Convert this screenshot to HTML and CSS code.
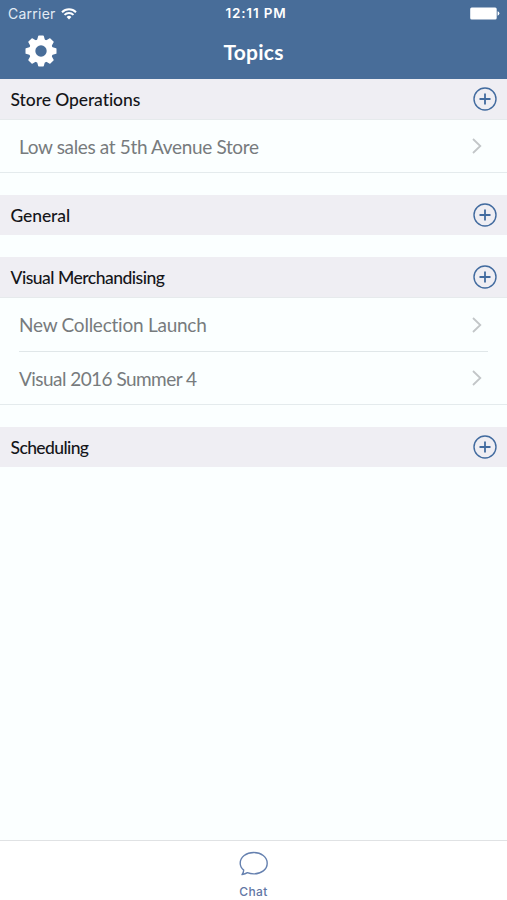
FILE: index.html
```html
<!DOCTYPE html>
<html lang="en">
<head>
<meta charset="utf-8">
<title>Topics</title>
<link rel="stylesheet" href="styles.css">
</head>
<body>
<svg width="0" height="0" class="defs">
  <symbol id="plus" viewBox="0 0 24 24"><circle cx="12" cy="12" r="11" fill="none" stroke="currentColor" stroke-width="1.4"/><path d="M12 6.5v11M6.5 12h11" fill="none" stroke="currentColor" stroke-width="1.8"/></symbol>
  <symbol id="chevron" viewBox="0 0 10 16"><path d="M1 1l7.3 7L1 15" fill="none" stroke="currentColor" stroke-width="1.8"/></symbol>
</svg>
<div class="app">
  <header class="header">
    <div class="status">
      <div class="carrier"><span>Carrier</span>
        <svg width="16" height="12" viewBox="0 0 16 12" fill="none" stroke="#fff" stroke-width="2"><path d="M1 4.2a10 10 0 0 1 14 0M3.5 6.9a6.4 6.4 0 0 1 9 0"/><path d="M8 11.4L5.6 9a3.4 3.4 0 0 1 4.8 0z" fill="#fff" stroke="none"/></svg>
      </div>
      <span class="time">12:11 PM</span>
      <svg class="battery" width="31" height="13" viewBox="0 0 31 13" fill="#fff"><rect x="1.2" y=".5" width="26.5" height="12" rx="1.5"/><path d="M28.6 4.3q1.8.6 1.8 2.2t-1.8 2.2z"/></svg>
    </div>
    <div class="nav">
      <svg class="gear" width="32" height="32" viewBox="-16 -16 32 32">
        <g fill="#fff">
          <path id="tooth" d="M-4.2-10L-2.8-15.1Q-2.7-15.5-2.2-15.5H2.2Q2.7-15.5 2.8-15.1L4.2-10V10L2.8 15.1Q2.7 15.5 2.2 15.5H-2.2Q-2.7 15.5-2.8 15.1L-4.2 10z"/>
          <use href="#tooth" transform="rotate(45)"/><use href="#tooth" transform="rotate(90)"/><use href="#tooth" transform="rotate(135)"/>
          <circle r="12"/>
        </g>
        <circle r="5.7" fill="#486d99"/>
      </svg>
      <h1 class="title">Topics</h1>
    </div>
  </header>
  <main class="topics">
    <section class="group">
      <h2 class="head lined"><span class="operations">Store Operations</span><svg class="plus"><use href="#plus"/></svg></h2>
      <div class="rows"><div class="row"><span class="sales">Low sales at 5th Avenue Store</span><svg class="chevron"><use href="#chevron"/></svg></div></div>
    </section>
    <section class="group">
      <h2 class="head"><span class="general">General</span><svg class="plus"><use href="#plus"/></svg></h2>
    </section>
    <section class="group">
      <h2 class="head lined"><span class="visual">Visual Merchandising</span><svg class="plus"><use href="#plus"/></svg></h2>
      <div class="rows">
        <div class="row"><span class="launch">New Collection Launch</span><svg class="chevron"><use href="#chevron"/></svg></div>
        <div class="row"><span class="summer">Visual 2016 Summer 4</span><svg class="chevron"><use href="#chevron"/></svg></div>
      </div>
    </section>
    <section class="group">
      <h2 class="head"><span class="scheduling">Scheduling</span><svg class="plus"><use href="#plus"/></svg></h2>
    </section>
  </main>
  <footer class="tabbar">
    <svg width="30" height="26" viewBox="0 0 30 26" fill="none" stroke="#6580af" stroke-width="1.4" stroke-linejoin="round"><path d="M4.7 19.1C2.3 17.2 1.2 14.8 1.2 12.2 1.2 6 7.3 1.5 14.7 1.5S28.2 6 28.2 12.2 22.4 22.9 14.7 22.9c-2.4 0-4.4-.4-6.3-1.2-1.4.9-3 1.5-5.4 1.9 1.1-1.2 1.7-2.6 1.7-4.5z"/></svg>
    <span class="tablabel">Chat</span>
  </footer>
</div>
</body>
</html>
```
FILE: styles.css
```css
* { box-sizing: border-box; }
body { margin: 0; font-family: Lato, "Liberation Sans", sans-serif; font-variant-ligatures: none; background: #fbffff; }
svg { display: block; flex: none; }
.defs { position: absolute; }
.app { display: flex; flex-direction: column; height: 900px; }
.header { height: 79px; background: #486d99; color: #fff; }
.status { display: grid; grid-template-columns: 1fr auto 1fr; align-items: center; height: 27px; padding: 0 7px 0 8px; font: 14px/27px Inter, sans-serif; }
.carrier { display: flex; align-items: center; gap: 5px; color: #e2ebf5; letter-spacing: .25px; }
.time { font-size: 13.5px; font-weight: 600; letter-spacing: .85px; padding-left: 4px; }
.battery { justify-self: end; }
.nav { display: grid; grid-template-columns: 1fr auto 1fr; height: 50px; align-items: center; }
.gear { margin-left: 24.5px; margin-top: -2px; }
.title { margin: 0; font-size: 21px; font-weight: 700; line-height: 26px; letter-spacing: .25px; }
.topics { flex: 1; display: flex; flex-direction: column; gap: 22px; }
.head { display: flex; align-items: center; justify-content: space-between; height: 40px; margin: 0; padding: 0 10px 0 10.5px; background: #efeef3; color: #151519; font-size: 17.5px; font-weight: 500; }
.head.lined { height: 41px; border-bottom: 1px solid #e6eaec; }
.plus { width: 24px; height: 24px; color: #426b9f; }
.operations { letter-spacing: -.08px; }
.general { letter-spacing: -.1px; }
.visual { letter-spacing: -.5px; }
.scheduling { letter-spacing: -.6px; }
.rows { border-bottom: 1px solid #e4ebed; }
.row { display: flex; align-items: center; justify-content: space-between; height: 53px; margin: 0 19px; padding-right: 6px; color: #777b7d; font-size: 19px; }
.row:only-child { height: 52px; }
.row + .row { border-top: 1px solid #e0e7e9; }
.sales { letter-spacing: -.35px; }
.launch { letter-spacing: -.24px; }
.summer { letter-spacing: -.55px; }
.chevron { width: 10px; height: 16px; color: #c2c6c8; }
.tabbar { height: 60px; border-top: 1px solid #e0e2e4; background: #fff; display: flex; flex-direction: column; align-items: center; padding-top: 10px; }
.tablabel { margin-top: 6px; font: 500 12px/18px Inter, sans-serif; color: #6277a5; letter-spacing: .4px; }
```
